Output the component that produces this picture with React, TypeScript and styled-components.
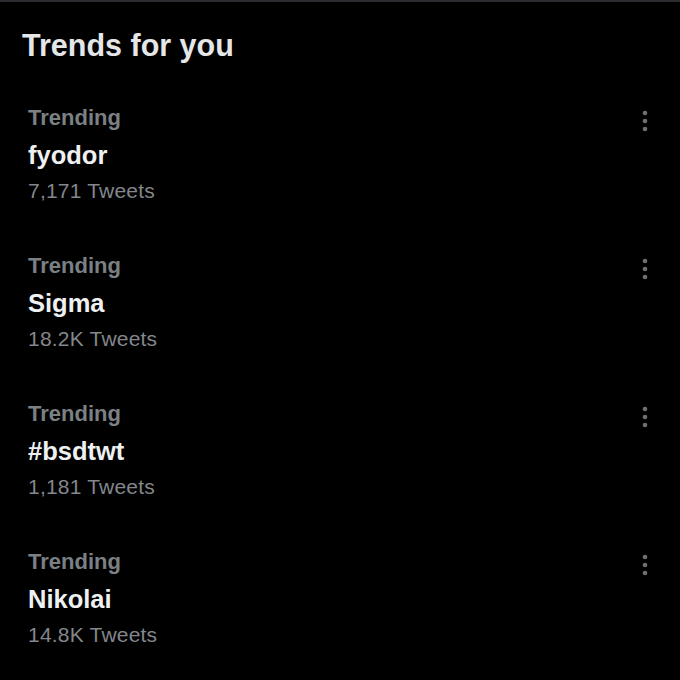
import styled, { createGlobalStyle } from "styled-components";

const GlobalStyle = createGlobalStyle`
  html, body {
    margin: 0;
    padding: 0;
    background: #000;
  }
  body {
    font-family: "Liberation Sans", Arial, sans-serif;
    -webkit-font-smoothing: antialiased;
  }
`;

const Panel = styled.section`
  width: 680px;
  min-height: 680px;
  box-sizing: border-box;
  background: #000;
  border-top: 2px solid #2a2c2f;
  padding-top: 23px;
`;

const Title = styled.h2`
  margin: 0;
  padding-left: 22px;
  font-size: 30.5px;
  line-height: 40px;
  font-weight: 700;
  color: #e4e6e7;
`;

const List = styled.div`
  margin-top: 38px;
  display: flex;
  flex-direction: column;
`;

const Item = styled.div`
  display: flex;
  align-items: flex-start;
  justify-content: space-between;
  height: 148px;
  box-sizing: border-box;
  padding: 0 25px 0 28px;
`;

const Info = styled.div`
  display: flex;
  flex-direction: column;
`;

const Context = styled.span`
  font-size: 22px;
  line-height: 30px;
  font-weight: 700;
  color: #7b8085;
`;

const Name = styled.span`
  font-size: 25.5px;
  line-height: 44px;
  font-weight: 700;
  color: #eef0f1;
`;

const Count = styled.span`
  font-size: 21px;
  line-height: 27px;
  color: #83878b;
  letter-spacing: 0.2px;
`;

const MenuButton = styled.button`
  margin-top: 6px;
  padding: 0;
  border: 0;
  background: transparent;
  width: 20px;
  height: 24px;
  display: flex;
  cursor: pointer;
`;

const MoreIcon = () => (
  <svg width="20" height="24" viewBox="0 0 20 24" fill="#6c7074">
    <circle cx="10" cy="4" r="2.3" />
    <circle cx="10" cy="12" r="2.3" />
    <circle cx="10" cy="20" r="2.3" />
  </svg>
);

const trends = [
  { name: "fyodor", count: "7,171 Tweets" },
  { name: "Sigma", count: "18.2K Tweets" },
  { name: "#bsdtwt", count: "1,181 Tweets" },
  { name: "Nikolai", count: "14.8K Tweets" },
];

export default function App() {
  return (
    <>
      <GlobalStyle />
      <Panel>
        <Title>Trends for you</Title>
        <List>
          {trends.map((t) => (
            <Item key={t.name}>
              <Info>
                <Context>Trending</Context>
                <Name>{t.name}</Name>
                <Count>{t.count}</Count>
              </Info>
              <MenuButton aria-label="More">
                <MoreIcon />
              </MenuButton>
            </Item>
          ))}
        </List>
      </Panel>
    </>
  );
}
